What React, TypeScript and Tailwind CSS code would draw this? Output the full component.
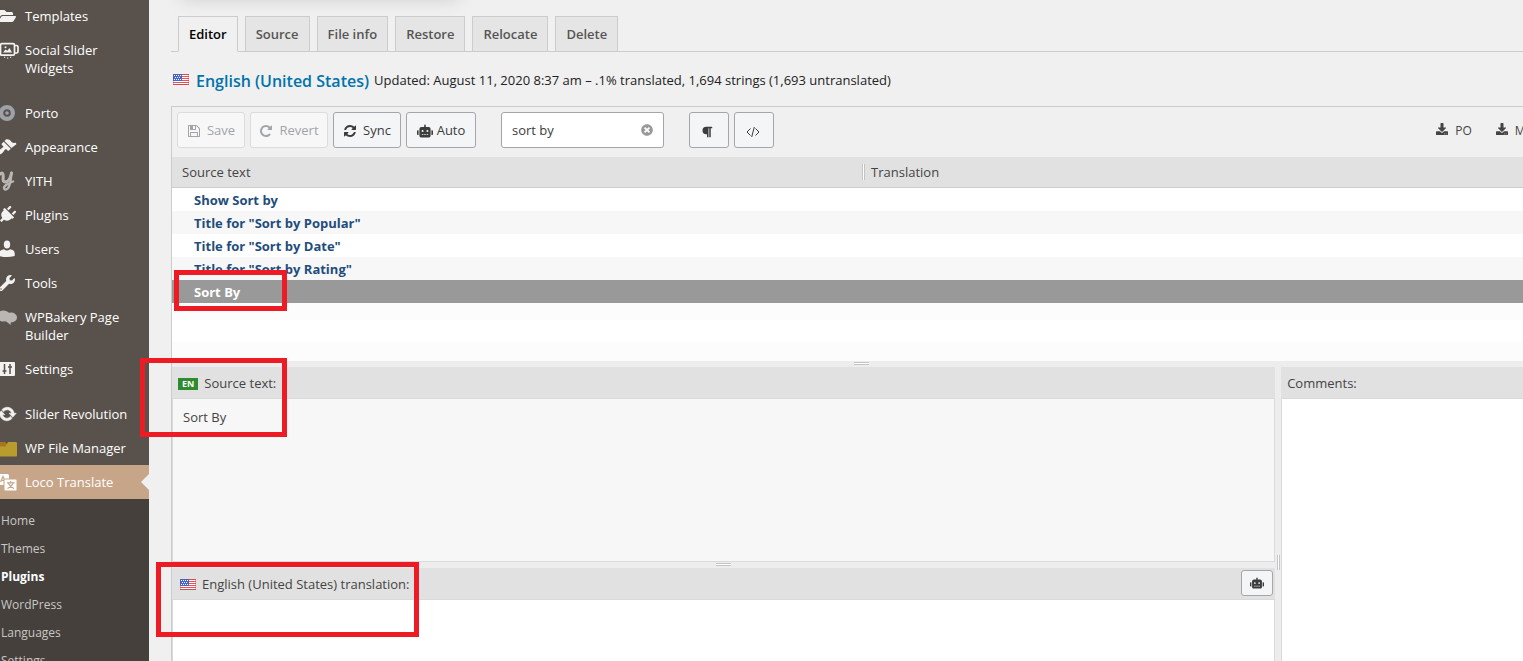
import React from "react";
import {
  FaDownload,
  FaFolderOpen,
  FaParagraph,
  FaPlug,
  FaRobot,
  FaTimesCircle,
  FaWrench,
} from "react-icons/fa";

type IconProps = { className?: string };

function SaveIcon({ className }: IconProps) {
  return (
    <svg viewBox="0 0 1792 1792" fill="currentColor" className={className} aria-hidden="true">
      <path d="M512 1536h768v-384h-768v384zm896 0h128v-896q0-14-10-38.5t-20-34.5l-281-281q-10-10-34-20t-39-10v416q0 40-28 68t-68 28h-576q-40 0-68-28t-28-68v-416h-128v1280h128v-416q0-40 28-68t68-28h832q40 0 68 28t28 68v416zm-384-928v-320q0-13-9.5-22.5t-22.5-9.5h-192q-13 0-22.5 9.5t-9.5 22.5v320q0 13 9.5 22.5t22.5 9.5h192q13 0 22.5-9.5t9.5-22.5zm640 32v928q0 40-28 68t-68 28h-1344q-40 0-68-28t-28-68v-1344q0-40 28-68t68-28h928q40 0 88 20t76 48l280 280q28 28 48 76t20 88z" />
    </svg>
  );
}

function RevertIcon({ className }: IconProps) {
  return (
    <svg viewBox="0 0 1792 1792" fill="currentColor" className={className} aria-hidden="true">
      <path d="M1664 256v448q0 26-19 45t-45 19h-448q-42 0-59-40-17-39 14-69l138-138q-148-137-349-137-104 0-198.5 40.5t-163.5 109.5-109.5 163.5-40.5 198.5 40.5 198.5 109.5 163.5 163.5 109.5 198.5 40.5q119 0 225-52t179-147q7-10 23-12 15 0 25 9l137 138q9 8 9.5 20.5t-7.5 22.5q-109 132-264 204.5t-327 72.5q-156 0-298-61t-245-164-164-245-61-298 61-298 164-245 245-164 298-61q147 0 284.5 55.5t244.5 156.5l130-129q29-31 70-14 39 17 39 59z" />
    </svg>
  );
}

function SyncIcon({ className }: IconProps) {
  return (
    <svg viewBox="0 0 1792 1792" fill="currentColor" className={className} aria-hidden="true">
      <path d="M1639 1056q0 5-1 7-64 268-268 434.5t-478 166.5q-146 0-282.5-55t-243.5-157l-129 129q-19 19-45 19t-45-19-19-45v-448q0-26 19-45t45-19h448q26 0 45 19t19 45-19 45l-137 137q71 66 161 102t187 36q134 0 250-65t186-179q11-17 53-117 8-23 30-23h192q13 0 22.5 9.5t9.5 22.5zm25-800v448q0 26-19 45t-45 19h-448q-26 0-45-19t-19-45 19-45l138-138q-148-137-349-137-134 0-250 65t-186 179q-11 17-53 117-8 23-30 23h-199q-13 0-22.5-9.5t-9.5-22.5v-7q65-268 270-434.5t480-166.5q146 0 284 55.5t245 156.5l130-129q19-19 45-19t45 19 19 45z" />
    </svg>
  );
}

function SliderWidgetIcon() {
  return (
    <svg viewBox="0 0 24 20" className="h-5 w-6 shrink-0" fill="none" stroke="currentColor" strokeWidth="1.7" aria-hidden="true">
      <rect x="5.500" y="3.700" width="14" height="11.500" rx="1.500" />
      <path d="M5.500 5.500H3.500Q2 5.500 2 7v4.500Q2 13 3.500 13h2M19.500 5.500h2Q23 5.500 23 7v4.500q0 1.500-1.500 1.500h-2" />
      <path d="M8 12.500l2.500-3 1.800 1.200L14.500 8l2.500 4.500z" fill="currentColor" stroke="none" />
      <circle cx="10.500" cy="7.200" r="1" fill="currentColor" stroke="none" />
      <path d="M9 17.200h1.200M12 18h1.200M15 17.200h1.200" strokeWidth="1" />
    </svg>
  );
}

function PortoIcon() {
  return (
    <svg viewBox="0 0 20 20" className="h-5 w-5 text-[#9ca2a7]" aria-hidden="true">
      <circle cx="10" cy="10" r="5.900" fill="none" stroke="currentColor" strokeWidth="4.200" />
      <circle cx="10" cy="10" r="1.800" fill="currentColor" />
    </svg>
  );
}

function BrushIcon() {
  return (
    <svg viewBox="0 0 20 20" className="h-5 w-5" fill="currentColor" aria-hidden="true">
      <path d="M14.480 11.060L7.410 3.990l1.500-1.500c.5-.56 2.300-.47 3.510.32 1.210.800 1.430 1.280 2 2.100 1.180.640 2.450 1.260 4.450.850l.500 1.500zm-.710.710L6.700 4.700 4.930 6.470c-.39.390-.39 1.020 0 1.410l1.060 1.060c.390.390.390 1.030 0 1.420-.6.600-1.430 1.110-2.210 1.690-.35.260-.7.530-1.010.840C1.430 14.230.400 16.080 1.400 17.070c.990 1 2.840-.03 4.180-1.360.310-.31.580-.66.850-1.020.570-.78 1.080-1.610 1.690-2.210.390-.39 1.020-.39 1.410 0l1.060 1.060c.390.390 1.020.390 1.410 0z" />
    </svg>
  );
}

function YithIcon() {
  return (
    <svg viewBox="0 0 20 22" className="h-[22px] w-5 text-[#b9b6b3]" fill="none" stroke="currentColor" strokeLinecap="round" aria-hidden="true">
      <path d="M2 5Q5 1.500 6 4.500Q6.500 7 6 9.500Q6.500 13 10 11.500Q13 10 14.500 3" strokeWidth="3" />
      <path d="M14.500 3Q14 10 12.500 15Q11 20 8 19.500Q5.500 18 9 15Q12 13 16 11.500" strokeWidth="2.400" />
    </svg>
  );
}

function UserIcon() {
  return (
    <svg viewBox="0 0 20 20" className="h-5 w-5" fill="currentColor" aria-hidden="true">
      <ellipse cx="10" cy="5.500" rx="3.200" ry="3.900" />
      <path d="M2.300 17v-2.800Q2.500 10.800 7 10.200Q10 12.600 13 10.200Q17.500 10.800 17.700 14.200V17Q10 19.200 2.300 17z" />
    </svg>
  );
}

function BakeryIcon() {
  return (
    <svg viewBox="0 0 20 20" className="h-5 w-5 text-[#b9b6b3]" fill="currentColor" aria-hidden="true">
      <ellipse cx="6.500" cy="9" rx="6.500" ry="5.500" />
      <ellipse cx="14" cy="10.500" rx="6" ry="5" />
      <path d="M7 13h7l-.5 5-3-2.500z" />
    </svg>
  );
}

function SettingsIcon() {
  return (
    <svg viewBox="0 0 20 20" className="h-5 w-5" aria-hidden="true">
      <rect x="2" y="3" width="16" height="14" rx="1" fill="currentColor" />
      <path d="M7.500 5v10M5.500 12h4M13 5v10M11 8h4" stroke="#59524c" strokeWidth="1.500" />
    </svg>
  );
}

function RevolutionIcon() {
  return (
    <svg viewBox="0 0 20 20" className="h-5 w-5" fill="currentColor" aria-hidden="true">
      <path d="M10.200 3.280c3.530 0 6.430 2.610 6.920 6h2.080l-3.500 4-3.500-4h2.320c-.45-1.970-2.210-3.450-4.320-3.450-1.450 0-2.730.710-3.540 1.780L4.950 5.660C6.230 4.200 8.110 3.280 10.200 3.280zm-.4 13.440c-3.520 0-6.430-2.610-6.920-6H.8l3.500-4c1.170 1.330 2.330 2.670 3.500 4H5.480c.45 1.970 2.210 3.450 4.320 3.450 1.450 0 2.730-.71 3.540-1.780l1.710 1.950c-1.280 1.460-3.150 2.380-5.250 2.380z" stroke="currentColor" strokeWidth=".6" />
    </svg>
  );
}

function FileManagerIcon() {
  return (
    <svg viewBox="0 0 20 20" className="h-5 w-5" aria-hidden="true">
      <path d="M0 4h8l2 2h10v4H0z" fill="#a8761f" />
      <path d="M0 8.500h8.500L11 4h8q1 0 1 1v12.500q0 1-1 1H0z" fill="#b89c2d" />
    </svg>
  );
}

function TranslateIcon() {
  return (
    <svg viewBox="0 0 20 20" className="h-5 w-5" aria-hidden="true">
      <rect x="0" y="2" width="12" height="11" rx="1.500" fill="#fff" />
      <path d="M3.500 10L6 4.500 8.500 10M4.300 8.300h3.400" fill="none" stroke="#c7a589" strokeWidth="1.200" />
      <rect x="7" y="7" width="13" height="12" rx="1.500" fill="#fff" stroke="#c7a589" />
      <path d="M10 10.800h7.500M13.700 9v1.800M11.500 11.500q1.500 3.500 5.500 5M16 11.500q-1.500 3.500-5.500 5" fill="none" stroke="#c7a589" strokeWidth="1.200" />
    </svg>
  );
}

function UsFlag() {
  return (
    <svg viewBox="0 0 16 11" className="h-[11px] w-4 shrink-0" aria-hidden="true">
      <rect width="16" height="11" fill="#fff" />
      <path d="M0 .5h16M0 2.500h16M0 4.500h16M0 6.500h16M0 8.500h16M0 10.500h16" stroke="#f0504f" />
      <rect width="9" height="7" fill="#3f67d8" />
      <path d="M1 1.500h7M2 3.500h6M1 5.500h7" stroke="#fff" strokeDasharray="1 1" />
      <rect x=".5" y=".5" width="15" height="10" fill="none" stroke="#8a4a6a" strokeOpacity=".35" />
    </svg>
  );
}

type MenuEntry = {
  label: string;
  icon: React.ReactNode;
  spaced?: boolean;
  active?: boolean;
};

const menu: MenuEntry[] = [
  { label: "Templates", icon: <FaFolderOpen className="h-[18px] w-[18px]" /> },
  { label: "Social Slider Widgets", icon: <SliderWidgetIcon /> },
  { label: "Porto", icon: <PortoIcon />, spaced: true },
  { label: "Appearance", icon: <BrushIcon /> },
  { label: "YITH", icon: <YithIcon /> },
  { label: "Plugins", icon: <FaPlug className="h-[18px] w-[18px] rotate-45" /> },
  { label: "Users", icon: <UserIcon /> },
  { label: "Tools", icon: <FaWrench className="h-4 w-4" /> },
  { label: "WPBakery Page Builder", icon: <BakeryIcon /> },
  { label: "Settings", icon: <SettingsIcon /> },
  { label: "Slider Revolution", icon: <RevolutionIcon />, spaced: true },
  { label: "WP File Manager", icon: <FileManagerIcon /> },
  { label: "Loco Translate", icon: <TranslateIcon />, active: true },
];

const submenu = ["Home", "Themes", "Plugins", "WordPress", "Languages", "Settings"];

function Sidebar() {
  return (
    <nav aria-label="Admin menu" className="-ml-[11px] w-40 shrink-0 bg-[#59524c] text-white">
      <ul className="-mt-px">
        {menu.map((m) => (
          <li key={m.label} className={m.spaced ? "pt-[11px]" : ""}>
            <a
              href="#"
              className={`relative flex items-start text-[13px] leading-[18px] font-medium ${m.active ? "bg-[#c7a589]" : ""}`}
            >
              <span className="flex h-[34px] w-9 shrink-0 items-center justify-center text-[#f3f2f1]">{m.icon}</span>
              <span className="py-2">{m.label}</span>
              {m.active && (
                <span className="absolute top-[9px] right-0 border-y-8 border-r-8 border-y-transparent border-r-[#f0f0f0]" />
              )}
            </a>
          </li>
        ))}
      </ul>
      <ul className="h-full bg-[#45403c] py-2">
        {submenu.map((s) => (
          <li key={s}>
            <a
              href="#"
              className={`block px-3 py-[5px] text-[12px] leading-[18px] ${s === "Plugins" ? "font-bold text-white" : "text-[#c9c7c5]"}`}
            >
              {s}
            </a>
          </li>
        ))}
      </ul>
    </nav>
  );
}

const tabs = ["Editor", "Source", "File info", "Restore", "Relocate", "Delete"];

function Tabs() {
  return (
    <nav aria-label="File sections" className="flex gap-[7px] border-b border-[#ccc] pt-4 pl-[7px]">
      {tabs.map((t, i) => (
        <a
          key={t}
          href="#"
          className={`-mb-px border border-[#ccc] px-2.5 pt-[5px] pb-[5px] text-[13px] leading-6 font-semibold ${
            i === 0 ? "border-b-[#f0f0f0] bg-[#f0f0f0] text-black" : "bg-[#e5e5e5] text-[#555]"
          }`}
        >
          {t}
        </a>
      ))}
    </nav>
  );
}

const buttonBase = "flex h-9 items-center justify-center rounded-[3px] border text-[13px]";
const buttonOn = "border-[#a3a6aa] bg-[#f3f5f6] text-[#3c3c3c]";
const buttonOff = "border-[#dcdcdc] bg-[#f7f7f7] text-[#a0a5aa]";

function Toolbar() {
  return (
    <div className="flex h-[50px] items-center gap-[5px] overflow-hidden pb-1 pl-[5px]">
      <button disabled className={`${buttonBase} ${buttonOff} w-[68px] gap-1.5 pt-0.5`}>
        <SaveIcon className="h-3.5 w-3.5" />
        Save
      </button>
      <button disabled className={`${buttonBase} ${buttonOff} w-[78px] gap-1.5 pt-0.5`}>
        <RevertIcon className="h-3.5 w-3.5" />
        Revert
      </button>
      <button className={`${buttonBase} ${buttonOn} w-[68px] gap-1.5 pt-0.5`}>
        <SyncIcon className="h-3.5 w-3.5" />
        Sync
      </button>
      <button className={`${buttonBase} ${buttonOn} w-[70px] gap-1 pt-0.5`}>
        <FaRobot className="h-4 w-4" />
        Auto
      </button>
      <div className="ml-5 flex h-9 w-[163px] items-center rounded-[3px] border border-[#a3a6aa] bg-white pr-2.5 pl-2.5">
        <input
          aria-label="Filter translations"
          defaultValue="sort by"
          className="min-w-0 flex-1 bg-transparent pt-0.5 text-[13px] text-[#3c3c3c] outline-none"
        />
        <button aria-label="Clear filter" className="text-[#999]">
          <FaTimesCircle className="h-3 w-3" />
        </button>
      </div>
      <button aria-label="Toggle invisible characters" className={`${buttonBase} ${buttonOn} ml-5 w-10 pt-1 pr-1`}>
        <FaParagraph className="h-3 w-3" />
      </button>
      <button aria-label="Toggle code view" className={`${buttonBase} ${buttonOn} w-10 pt-1 pr-0.5`}>
        <svg viewBox="0 0 14 12" className="h-3 w-3.5" fill="none" stroke="currentColor" aria-hidden="true">
          <path d="M4.500 2.500L1 6l3.500 3.500M9.500 2.500L13 6 9.500 9.500M8.300 1L5.700 11" />
        </svg>
      </button>
      <div className="-mr-3 ml-auto flex gap-6 pt-0.5 text-[12px] text-[#444]">
        {["PO", "MO"].map((f) => (
          <a key={f} href="#" className="flex items-center gap-[7px]">
            <FaDownload className="mb-1 h-3 w-3" />
            {f}
          </a>
        ))}
      </div>
    </div>
  );
}

const rows = [
  "Show Sort by",
  'Title for "Sort by Popular"',
  'Title for "Sort by Date"',
  'Title for "Sort by Rating"',
  "Sort By",
];

function Listing() {
  return (
    <div className="h-[204px] overflow-hidden bg-white">
      <table className="w-full table-fixed border-separate border-spacing-0 text-left text-[13px]">
        <thead>
          <tr className="h-[31px] bg-[#e1e1e1] text-[#444]">
            <th className="w-[51.3%] border-b border-[#ccc] py-0 pr-0 pl-2.5 font-normal">
              <div className="flex items-center justify-between leading-5">
                Source text
                <span className="h-4 w-[3px] border-x border-[#c4c4c4] bg-white" />
              </div>
            </th>
            <th className="border-b border-[#ccc] px-1.5 py-0 leading-5 font-normal">Translation</th>
          </tr>
        </thead>
        <tbody>
          {rows.map((r, i) => (
            <tr
              key={r}
              className={`h-[23px] font-bold ${
                i === 4 ? "bg-[#999] text-white" : i % 2 ? "bg-[#f7f7f7] text-[#1f4d7c]" : "bg-white text-[#1f4d7c]"
              }`}
            >
              <td className="py-0 pl-[22px] leading-[22px]">{r}</td>
              <td className="p-0" />
            </tr>
          ))}
        </tbody>
      </table>
      <div className="h-[17px] bg-[#fcfcfc]" />
      <div className="h-[22px]" />
      <div className="h-[22px] bg-[#fcfcfc]" />
    </div>
  );
}

function HorizontalGrip({ className = "" }: IconProps) {
  return (
    <div className={`flex h-1.5 shrink-0 items-start justify-center bg-[#ededed] pt-px ${className}`}>
      <span className="h-[3px] w-[15px] border-y border-[#c4c4c4] bg-white" />
    </div>
  );
}

const paneHeader =
  "flex h-8 shrink-0 items-center border-b border-[#dadada] bg-[#e1e1e1] text-[13px] text-[#444]";

function Panes() {
  return (
    <div className="flex min-h-0 flex-1">
      <div className="flex min-w-0 flex-1 flex-col">
        <section className="flex flex-col border-b border-[#dadada]">
          <div className={`${paneHeader} gap-1.5 pt-0.5 pl-1.5`}>
            <span className="bg-[#2e8b2e] px-1 text-[9px] leading-3 font-bold text-white">EN</span>
            <h2>Source text:</h2>
          </div>
          <div className="h-[162px] border-x border-[#dadada] bg-[#f7f7f7] px-2.5 py-[9px] text-[13px] leading-[18px] text-[#444]">
            Sort By
          </div>
        </section>
        <HorizontalGrip />
        <div className={`${paneHeader} gap-1.5 pt-0.5 pr-0.5 pl-2`}>
          <UsFlag />
          <label htmlFor="translation">English (United States) translation:</label>
          <button
            aria-label="Suggest translation"
            className={`mb-[3px] ml-auto flex h-[26px] w-8 items-center justify-center rounded-[3px] border ${buttonOn}`}
          >
            <FaRobot className="h-3.5 w-3.5" />
          </button>
        </div>
        <textarea
          id="translation"
          className="block w-full flex-1 resize-none border-x border-[#dadada] bg-white p-2.5 text-[13px] outline-none"
        />
      </div>
      <div className="flex w-1.5 shrink-0 items-center justify-center bg-[#ededed] pt-24">
        <span className="h-[15px] w-[3px] border-x border-[#c4c4c4] bg-white" />
      </div>
      <section className="flex w-[17.9%] shrink-0 flex-col">
        <div className={`${paneHeader} pt-0.5 pl-1.5`}>
          <label htmlFor="comments">Comments:</label>
        </div>
        <textarea
          id="comments"
          className="block w-full flex-1 resize-none border-l border-[#dadada] bg-white p-2.5 text-[13px] outline-none"
        />
      </section>
    </div>
  );
}

export default function App() {
  return (
    <div className="relative flex h-screen overflow-hidden bg-[#f0f0f0] font-['Open_Sans','Noto_Sans',sans-serif] text-[#222]">
      <Sidebar />
      <main className="flex min-w-0 flex-1 flex-col pl-[22px]">
        <Tabs />
        <header className="flex h-[54px] items-center gap-[5px] pt-1 pl-0.5">
          <span className="pb-1">
            <UsFlag />
          </span>
          <h1 className="ml-0.5 text-[16px] font-semibold whitespace-nowrap text-[#0073aa]">
            <a href="#">English (United States)</a>
          </h1>
          <p className="text-[13px] whitespace-nowrap">
            Updated: August 11, 2020 8:37 am – .1% translated, 1,694 strings (1,693 untranslated)
          </p>
        </header>
        <div className="flex min-h-0 flex-1 flex-col border-t border-l border-[#ccc]">
          <Toolbar />
          <Listing />
          <HorizontalGrip className="pl-7" />
          <Panes />
        </div>
      </main>

      <div className="pointer-events-none absolute -top-10 left-[180px] h-9 w-[280px] shadow-[0_3px_18px_rgba(0,0,0,0.14)]" />
      <div className="pointer-events-none absolute top-[270px] left-[174px] h-[41px] w-[113px] border-5 border-[#ed1c24]" />
      <div className="pointer-events-none absolute top-[358px] left-[140px] h-[79px] w-[147px] border-5 border-[#ed1c24]" />
      <div className="pointer-events-none absolute top-[562px] left-[156px] h-[75px] w-[263px] border-5 border-[#ed1c24]" />
    </div>
  );
}
